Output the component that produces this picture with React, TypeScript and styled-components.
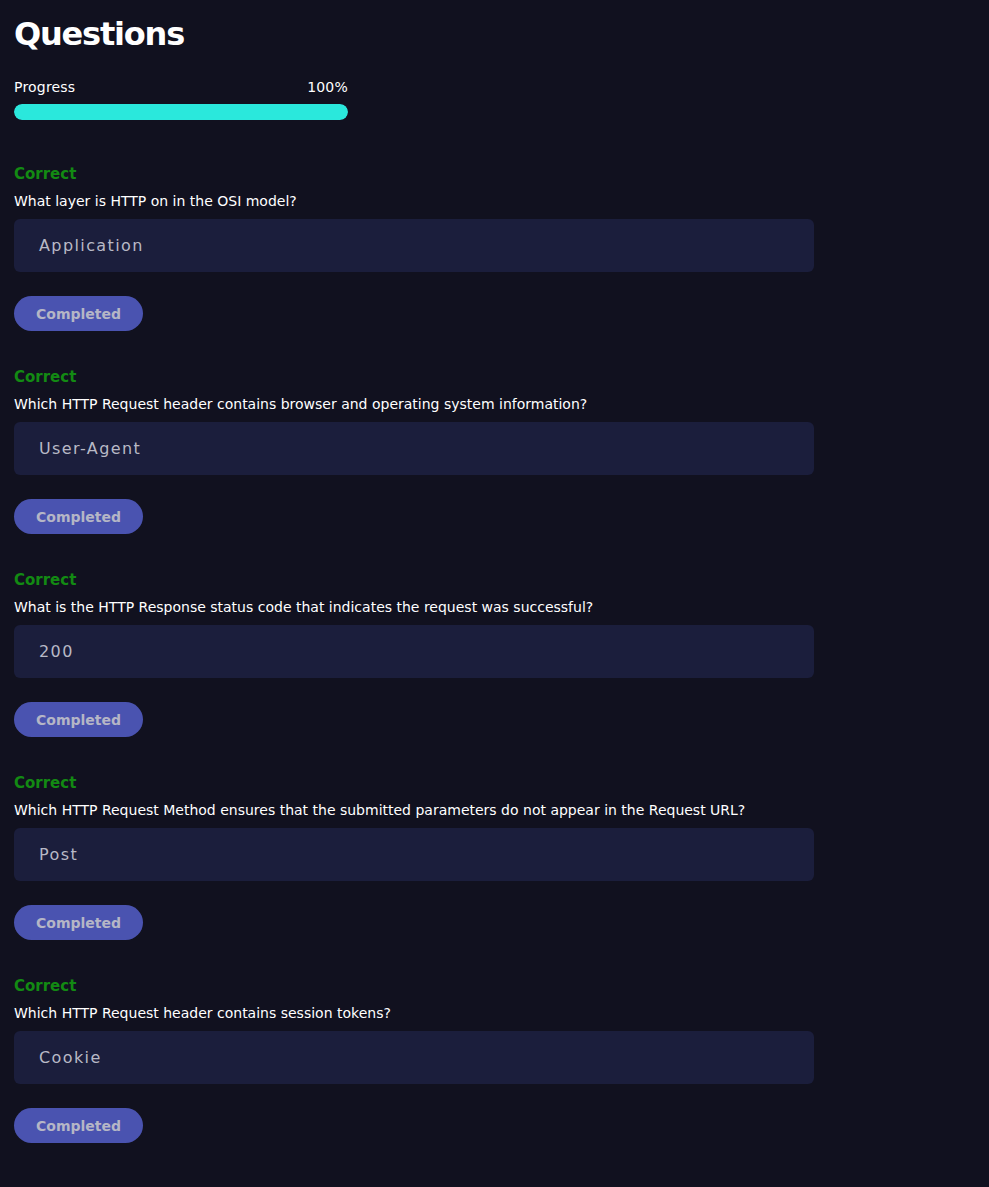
import styled, { createGlobalStyle } from "styled-components"

const questions = [
  { prompt: "What layer is HTTP on in the OSI model?", answer: "Application" },
  { prompt: "Which HTTP Request header contains browser and operating system information?", answer: "User-Agent" },
  { prompt: "What is the HTTP Response status code that indicates the request was successful?", answer: "200" },
  { prompt: "Which HTTP Request Method ensures that the submitted parameters do not appear in the Request URL?", answer: "Post" },
  { prompt: "Which HTTP Request header contains session tokens?", answer: "Cookie" },
]

const progress = 100

export default function App() {
  return (
    <>
      <GlobalStyle />
      <Page>
        <Title>Questions</Title>
        <ProgressHead>
          <span>Progress</span>
          <span>{progress}%</span>
        </ProgressHead>
        <Track>
          <Fill style={{ width: `${progress}%` }} />
        </Track>
        <List>
          {questions.map((q) => (
            <Question key={q.prompt}>
              <Status>Correct</Status>
              <Prompt>{q.prompt}</Prompt>
              <Answer>{q.answer}</Answer>
              <DoneButton>Completed</DoneButton>
            </Question>
          ))}
        </List>
      </Page>
    </>
  )
}

const GlobalStyle = createGlobalStyle`
  html, body {
    margin: 0;
    background: #11111f;
  }
  body {
    font-family: "DejaVu Sans", "Open Sans", sans-serif;
    color: #ffffff;
  }
`

const Page = styled.div`
  min-height: 1187px;
  padding: 14px 14px 0 14px;
  box-sizing: border-box;
`

const Title = styled.h1`
  margin: 0;
  font-size: 32px;
  line-height: 40px;
  font-weight: 700;
  letter-spacing: -1.2px;
`

const ProgressHead = styled.div`
  display: flex;
  justify-content: space-between;
  width: 334px;
  margin-top: 24px;
  font-size: 14px;
  line-height: 19px;
  font-weight: 500;
  letter-spacing: 0.2px;
`

const Track = styled.div`
  width: 334px;
  height: 16px;
  margin-top: 7px;
  border-radius: 8px;
  background: #2a2d4a;
  overflow: hidden;
`

const Fill = styled.div`
  height: 100%;
  border-radius: 8px;
  background: #2ae8dc;
`

const List = styled.div`
  display: flex;
  flex-direction: column;
  gap: 35px;
  margin-top: 43px;
`

const Question = styled.section`
  display: flex;
  flex-direction: column;
  align-items: flex-start;
`

const Status = styled.div`
  color: #138a13;
  font-size: 15px;
  line-height: 22px;
  font-weight: 700;
`

const Prompt = styled.div`
  margin-top: 7px;
  font-size: 14px;
  line-height: 18px;
`

const Answer = styled.div`
  box-sizing: border-box;
  width: 800px;
  height: 53px;
  margin-top: 9px;
  padding: 0 25px;
  display: flex;
  align-items: center;
  border-radius: 6px;
  background: #1b1e3c;
  color: #b8b9c6;
  font-size: 16px;
  letter-spacing: 1.4px;
`

const DoneButton = styled.button`
  margin-top: 24px;
  width: 129px;
  height: 35px;
  border: none;
  border-radius: 18px;
  background: #4a53b0;
  color: #b5b6c6;
  font-family: inherit;
  font-size: 14px;
  font-weight: 700;
  cursor: pointer;
`
